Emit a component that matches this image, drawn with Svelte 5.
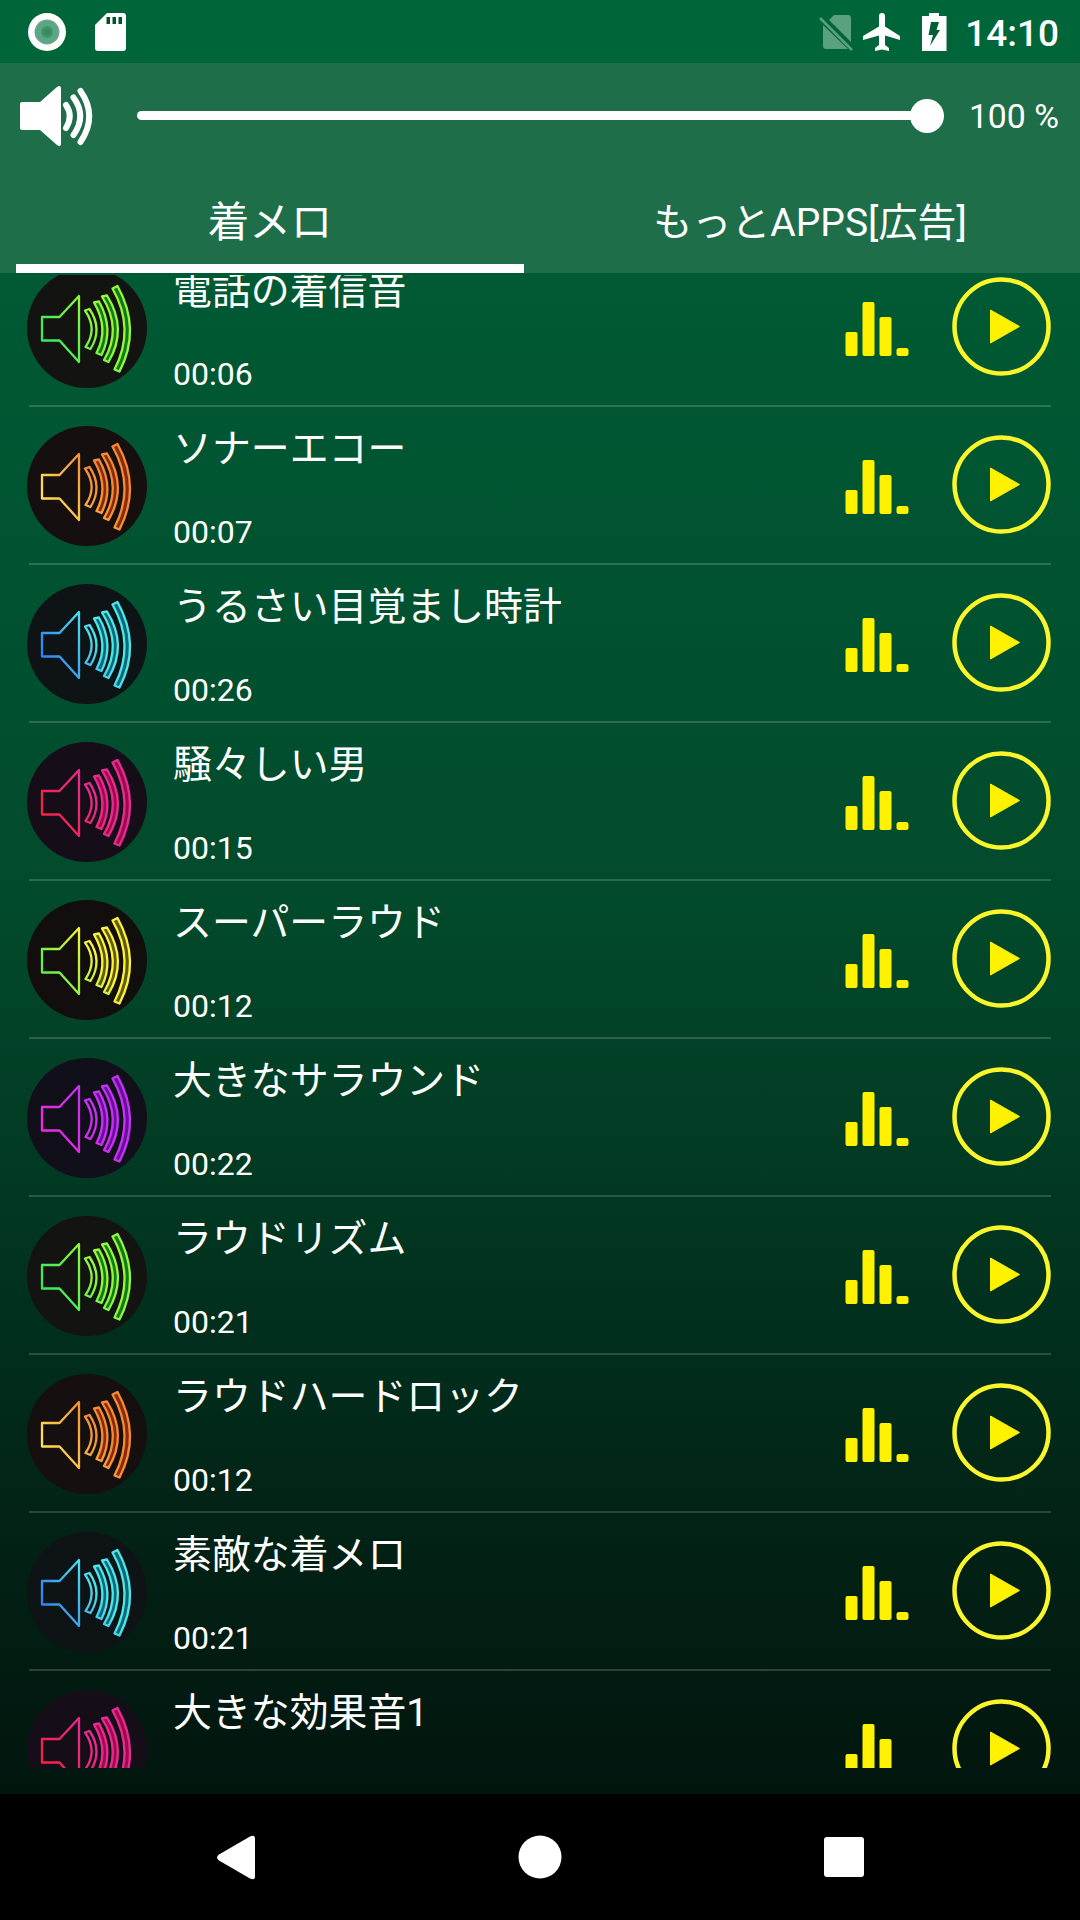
<script>
  const palettes = {
    green: { back: '#131311', start: '#2fe860', end: '#95f73c', fill: '#127a1c' },
    orange: { back: '#150f10', start: '#ffe858', end: '#f48a34', fill: '#8a2a0c' },
    blue: { back: '#0e1416', start: '#2f7df0', end: '#4de6ea', fill: '#0b6a76' },
    red: { back: '#150e18', start: '#f4233f', end: '#e62c92', fill: '#a00a4c' },
    yellow: { back: '#110e0d', start: '#4ff04c', end: '#fff23a', fill: '#5c5c0a' },
    purple: { back: '#100f1a', start: '#f02ae0', end: '#c432f2', fill: '#6a0f9c' }
  };

  const ringtones = [
    { title: '電話の着信音', time: '00:06', tone: 'green' },
    { title: 'ソナーエコー', time: '00:07', tone: 'orange' },
    { title: 'うるさい目覚まし時計', time: '00:26', tone: 'blue' },
    { title: '騒々しい男', time: '00:15', tone: 'red' },
    { title: 'スーパーラウド', time: '00:12', tone: 'yellow' },
    { title: '大きなサラウンド', time: '00:22', tone: 'purple' },
    { title: 'ラウドリズム', time: '00:21', tone: 'green' },
    { title: 'ラウドハードロック', time: '00:12', tone: 'orange' },
    { title: '素敵な着メロ', time: '00:21', tone: 'blue' },
    { title: '大きな効果音1', time: '', tone: 'red' }
  ];
</script>

<div class="screen">
  <div class="status">
    <svg class="record" width="40" height="40" viewBox="0 0 40 40">
      <circle cx="20" cy="20" r="19" fill="#fff" />
      <circle cx="20" cy="20" r="12.5" fill="#7d9f8f" />
      <circle cx="20" cy="20" r="11" fill="#58a885" />
      <circle cx="20" cy="20" r="6" fill="#43936f" />
      <circle cx="20" cy="20" r="3.5" fill="#358a62" />
    </svg>
    <svg class="sd" width="32" height="40" viewBox="0 0 32 40">
      <path d="M12 1H28Q31 1 31 4V36Q31 39 28 39H3Q0 39 0 36V13Z" fill="#fff" />
      <path d="M11.500 5h3.500v7h-3.500zM17.500 5h3.500v7h-3.500zM23.500 5h3.500v7h-3.500z" fill="#00552e" />
    </svg>
    <span class="spacer"></span>
    <svg class="sim" width="36" height="40" viewBox="0 0 36 40">
      <path d="M15 3H29Q32 3 32 6V30L10 8Z" fill="#5ba07f" />
      <path d="M4 13L29 37H7Q4 37 4 34Z" fill="#5ba07f" />
      <path d="M1 6L33 38" stroke="#5ba07f" stroke-width="2.500" />
    </svg>
    <svg class="plane" width="40" height="40" viewBox="0 0 40 40">
      <path d="M38 28V24L23 14.500V4Q23 1 20 1T17 4V14.500L1 24V28L17 23.500V33L13 36V39L20 37.500L27 39V36L23 33V23.500Z" fill="#fff" />
    </svg>
    <svg class="battery" width="26" height="40" viewBox="0 0 26 40">
      <path d="M8 1H18V4H25.500V39H1V4H8Z" fill="#fff" />
      <path d="M10 10H18L15.500 18H19L9 34L12 23H7.500Z" fill="#005f35" />
    </svg>
    <span class="clock">14:10</span>
  </div>

  <header>
    <div class="volume">
      <svg width="84" height="68" viewBox="0 0 84 68">
        <path d="M4 20H22L39 5Q43 2 43 7V61Q43 66 39 63L22 48H4Q2 48 2 46V22Q2 20 4 20Z" fill="#fff" />
        <g fill="none" stroke="#fff" stroke-width="6" stroke-linecap="round">
          <path d="M48 23Q55.500 34 48 46" />
          <path d="M55.500 15.500Q69 34 55.500 53" />
          <path d="M62.500 9Q80 34 62.500 60" />
        </g>
      </svg>
      <div class="track"><span class="thumb"></span></div>
      <span class="percent">100 %</span>
    </div>
    <nav class="tabs">
      <div class="tab active">着メロ</div>
      <div class="tab">もっとAPPS[広告]</div>
    </nav>
  </header>

  <main>
    <div class="rows">
      {#each ringtones as item, i}
        {@const p = palettes[item.tone]}
        <div class="row">
          <svg class="badge" width="120" height="120" viewBox="0 0 120 120">
            <defs>
              <linearGradient id="glow-{i}" gradientUnits="userSpaceOnUse" x1="15" y1="78" x2="68" y2="48">
                <stop offset="0" stop-color={p.start} />
                <stop offset="1" stop-color={p.end} />
              </linearGradient>
            </defs>
            <circle cx="60" cy="60" r="60" fill={p.back} />
            <g stroke="url(#glow-{i})" stroke-width="2.300" stroke-linejoin="round">
              <path fill="none" d="M15 49H32.500L52 28V94L32.500 72.500H15Z" />
              <g fill={p.fill}>
                <path fill={p.back} d="M58 42.500L62.500 41Q76 61 63.500 81L58.500 79Q71 61 58 42.500Z" />
                <path d="M67 34.500L72 33.500Q87.500 61 74.500 87L69.500 85Q82.500 61 67 34.500Z" />
                <path d="M75 28.500L80 27.500Q101 61 81.500 94L77 92Q95.500 61 75 28.500Z" />
                <path d="M85.500 20.500L90.500 18Q114.500 61 92.500 103.500L87.500 101.500Q108.500 61 85.500 20.500Z" />
              </g>
            </g>
          </svg>
          <div class="text">
            <div class="title">{item.title}</div>
            <div class="time">{item.time}</div>
          </div>
          <svg class="bars" width="64" height="54" viewBox="0 0 64 54" fill="#fff200">
            <rect x="0.500" y="30" width="12" height="24" rx="2" />
            <rect x="17.500" y="0" width="12" height="54" rx="2" />
            <rect x="34.500" y="15" width="12" height="39" rx="2" />
            <rect x="51.500" y="46" width="12" height="8" rx="2.500" />
          </svg>
          <svg class="play" width="100" height="100" viewBox="0 0 100 100">
            <circle cx="50.500" cy="50.500" r="47" fill="none" stroke="#fbf62c" stroke-width="4.500" />
            <path d="M39.500 34L68.500 50.500L39.500 67Z" fill="#fff200" stroke="#fff200" stroke-linejoin="round" />
          </svg>
        </div>
      {/each}
    </div>
  </main>

  <footer>
    <svg width="304" height="126" viewBox="0 0 304 126"><path d="M135 60.500L166 42.500Q171 40 171 45V82Q171 87 166 84.500L135 66.500Q131 63.500 135 60.500Z" fill="#fff" /></svg>
    <svg width="304" height="126" viewBox="0 0 304 126"><circle cx="152" cy="63" r="21.500" fill="#fff" /></svg>
    <svg width="304" height="126" viewBox="0 0 304 126"><rect x="132" y="43" width="40" height="40" rx="3" fill="#fff" /></svg>
  </footer>
</div>

<style>
  :global(body) {
    margin: 0;
    background: #000;
  }
  .screen {
    width: 1080px;
    height: 1920px;
    display: flex;
    flex-direction: column;
    overflow: hidden;
    color: #fff;
    font-family: Roboto, 'Noto Sans CJK JP', sans-serif;
    background: linear-gradient(#00673a 0, #005a34 273px, #005230 600px, #024a2c 900px, #023e25 1100px, #01311e 1300px, #022416 1500px, #021a11 1700px, #01150d 1794px);
  }
  .status {
    height: 63px;
    flex: none;
    display: flex;
    align-items: center;
    padding: 0 21px 0 27px;
    background: #006539;
    box-sizing: border-box;
  }
  .sd {
    margin-left: 28px;
  }
  .spacer {
    flex: 1;
  }
  .plane {
    margin-left: 7px;
  }
  .battery {
    margin-left: 19px;
    margin-right: 18px;
  }
  .clock {
    font-size: 37px;
    font-weight: 500;
    line-height: 40px;
    padding-top: 4px;
  }
  header {
    height: 210px;
    flex: none;
    display: flex;
    flex-direction: column;
    background: #1f6e4a;
  }
  .volume {
    height: 105px;
    display: flex;
    align-items: center;
    padding: 0 21px 0 18px;
  }
  .track {
    height: 9px;
    width: 805px;
    flex: none;
    margin-left: 35px;
    border-radius: 5px;
    background: #fff;
    display: flex;
    align-items: center;
    justify-content: flex-end;
  }
  .thumb {
    width: 34px;
    height: 34px;
    margin-right: -2px;
    border-radius: 50%;
    background: #fff;
  }
  .percent {
    flex: 1;
    text-align: right;
    font-size: 33.800px;
    line-height: 40px;
    padding-top: 2px;
    white-space: nowrap;
  }
  .tabs {
    height: 105px;
    display: flex;
  }
  .tab {
    width: 508px;
    height: 105px;
    margin: 0 16px;
    box-sizing: border-box;
    border-bottom: 9px solid transparent;
    text-align: center;
    font-size: 39px;
    line-height: 110px;
    white-space: nowrap;
  }
  .active {
    font-size: 41.500px;
    border-color: #fff;
  }
  main {
    height: 1493px;
    flex: none;
    margin: 2px 0 26px;
    overflow: hidden;
  }
  .rows {
    margin-top: -26px;
  }
  .row {
    height: 158px;
    box-sizing: border-box;
    margin: 0 29px;
    border-bottom: 2px solid rgba(255, 255, 255, 0.17);
    display: flex;
    align-items: flex-start;
  }
  .badge {
    flex: none;
    margin: 19px 0 0 -2px;
  }
  .text {
    flex: 1;
    margin-left: 26px;
  }
  .title {
    height: 80px;
    line-height: 84px;
    font-size: 38.900px;
    white-space: nowrap;
  }
  .time {
    margin-top: 25px;
    height: 40px;
    line-height: 40px;
    font-size: 32px;
  }
  .bars {
    margin-top: 53px;
  }
  .play {
    margin: 27px 0 0 42px;
  }
  footer {
    height: 126px;
    flex: none;
    display: flex;
    justify-content: center;
    background: #000;
  }
</style>
